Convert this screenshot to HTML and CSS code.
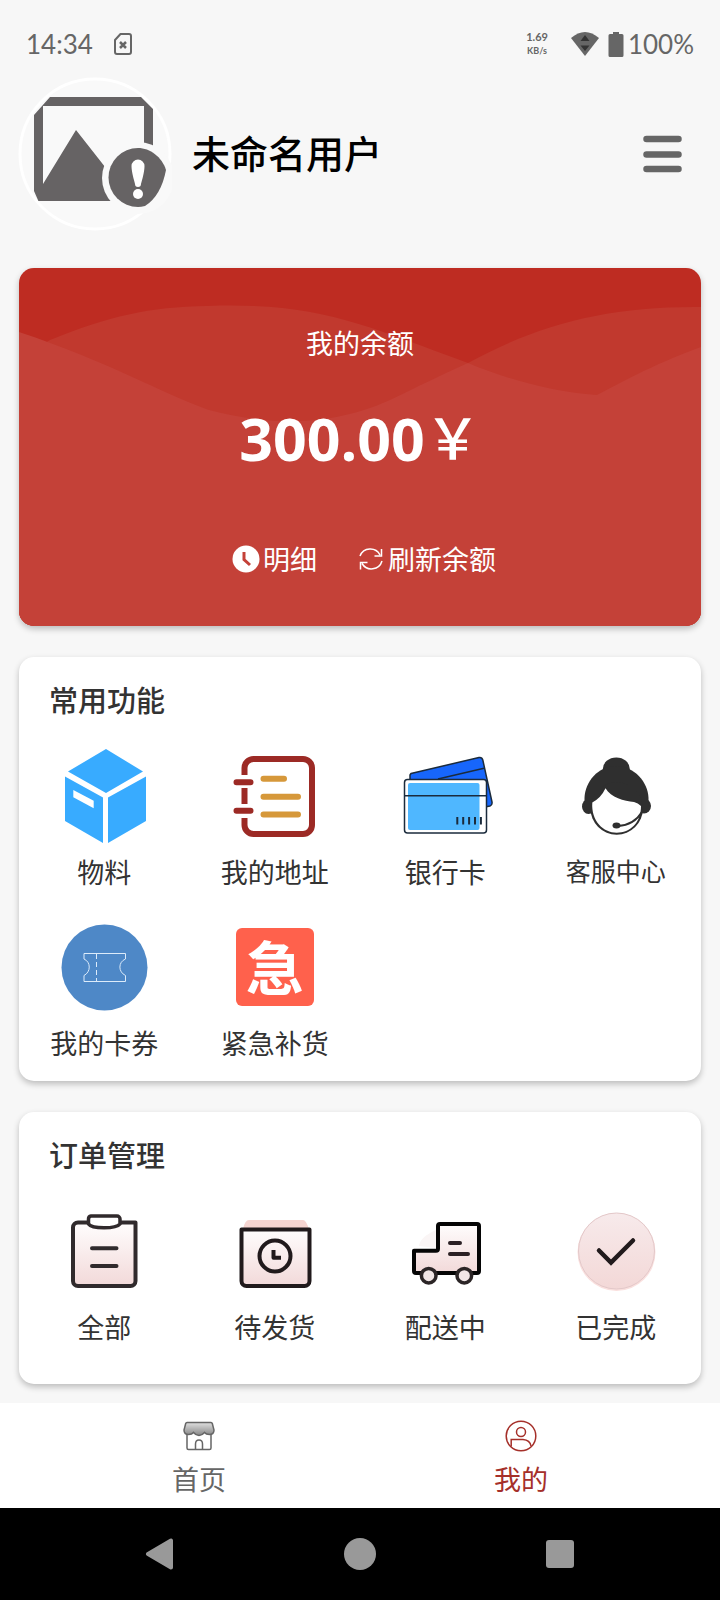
FILE: index.html
```html
<!DOCTYPE html>
<html lang="zh-CN">
<head>
<meta charset="utf-8">
<meta name="viewport" content="width=device-width, initial-scale=1">
<title>我的</title>
<link rel="stylesheet" href="styles.css">
</head>
<body>
<div class="statusbar">
  <span class="clock">14:34</span>
  <svg class="sim" viewBox="0 0 20 24" width="20" height="24" aria-hidden="true">
    <path d="M7.500 2H16a2 2 0 0 1 2 2V20a2 2 0 0 1-2 2H4a2 2 0 0 1-2-2V8Z" fill="none" stroke="#666" stroke-width="2" stroke-linejoin="round"/>
    <path d="M7 10l6 6M13 10l-6 6" stroke="#666" stroke-width="2.500"/>
  </svg>
  <span class="speed"><span>1.69</span><span class="unit">KB/s</span></span>
  <svg class="wifi" viewBox="0 0 30 26" width="30" height="26" aria-hidden="true">
    <path d="M1 7Q15-5 29 7L15 25Z" fill="#666"/>
    <path d="M15 4l4.500 6h-9ZM15 20l-4.500-5.500h9Z" fill="#333"/>
  </svg>
  <svg viewBox="0 0 16 26" width="16" height="26" aria-hidden="true">
    <path d="M5 1h6v2h3a1.500 1.500 0 0 1 1.500 1.500V24.500A1.500 1.500 0 0 1 14 26H2A1.500 1.500 0 0 1 .5 24.500V4.500A1.500 1.500 0 0 1 2 3h3Z" fill="#666"/>
  </svg>
  <span class="battery">100%</span>
</div>

<header class="profile">
  <svg class="avatar" viewBox="0 0 154 154" role="img" aria-label="头像">
    <defs><clipPath id="round"><path d="M32 20H123L135 32V83L148 93L149 98Q140 122 127 130H23L16 114V38Z"/></clipPath></defs>
    <circle cx="77" cy="77" r="75" fill="#f9f9f9" stroke="#fff" stroke-width="3"/>
    <g clip-path="url(#round)">
      <path d="M16 20H135V124H16ZM25 29V107L58 53L91 95L126 90V29Z" fill="#666364" fill-rule="evenodd"/>
    </g>
    <circle cx="120" cy="101" r="36" fill="#f9f9f9"/>
    <path d="M120 71C132 71 144 80 148 93Q143 119 127 129Q123 130 120 130A29.500 29.500 0 0 1 120 71Z" fill="#666364"/>
    <path d="M113.500 89a6.500 6.500 0 0 1 13 0C126.500 95 124 103 123 107a3 3 0 0 1-6 0C116 103 113.500 95 113.500 89Z" fill="#fff"/>
    <circle cx="120" cy="117" r="5" fill="#fff"/>
  </svg>
  <h1 class="username">未命名用户</h1>
  <button class="menu" type="button" aria-label="菜单">
    <svg viewBox="0 0 39 38" width="39" height="38" aria-hidden="true">
      <path d="M3.500 4H35.500M3.500 19.500H35.500M3.500 34H35.500" stroke="#666" stroke-width="6.500" stroke-linecap="round"/>
    </svg>
  </button>
</header>

<main class="content">
  <section class="balance">
    <svg class="waves" viewBox="0 0 682 358" preserveAspectRatio="none" aria-hidden="true">
      <path d="M0 90L31 72C90 48 130 39 188 38C300 34 345 57 449 95C520 56 590 38 682 39V358H0Z" fill="#c1392e"/>
      <path d="M0 64C90 94 140 124 190 142C280 166 340 146 371 132C400 118 420 108 449 95C490 112 535 124 578 127C600 116 630 98 682 79V358H0Z" fill="#c44138"/>
    </svg>
    <h2 class="balance-label">我的余额</h2>
    <p class="amount">300.00<span class="yen">￥</span></p>
    <div class="actions">
      <button class="action" type="button">
        <svg viewBox="0 0 28 28" width="28" height="28" aria-hidden="true">
          <circle cx="14" cy="14" r="13.500" fill="#fff"/>
          <path d="M12 7V14.500L18 20" fill="none" stroke="#c44138" stroke-width="3"/>
        </svg>明细</button>
      <button class="action" type="button">
        <svg viewBox="0 0 28 28" width="28" height="28" aria-hidden="true">
          <path d="M3 11A11 11 0 0 1 23 10M24.500 4V11H17.500M25 16A11 11 0 0 1 5 18.500M3.500 24.500V17.500H10.500" fill="none" stroke="#fff" stroke-width="1.500"/>
        </svg>刷新余额</button>
    </div>
  </section>

  <section class="card">
    <h2 class="card-title">常用功能</h2>
    <div class="grid">
      <a class="item" href="#">
        <svg class="icon" viewBox="0 0 96 96" aria-hidden="true">
          <path d="M50 1L87 23.500L50 45L12 23.500ZM9 28.500L47 49.500V95L9 73ZM90 28.500L52 49.500V95L90 73Z" fill="#38abff"/>
          <path d="M17.300 42L37.700 52.700V60.300L17.300 49.300Z" fill="#fff"/>
        </svg>物料</a>
      <a class="item" href="#">
        <svg class="icon" viewBox="0 0 96 96" fill="none" stroke-width="6" aria-hidden="true">
          <path d="M17.500 27V20a9 9 0 0 1 9-9H76a9 9 0 0 1 9 9V77a9 9 0 0 1-9 9H26.500a9 9 0 0 1-9-9V70M17.500 40V56" stroke="#9c2a25"/>
          <path d="M9.500 34.300H23.500M9.500 62.700H23.500" stroke="#9c2a25" stroke-linecap="round"/>
          <path d="M36.500 30.700H57M36.500 48.700H71M36.500 66.500H71" stroke="#d6983a" stroke-linecap="round"/>
        </svg>我的地址</a>
      <a class="item" href="#">
        <svg class="icon" viewBox="0 0 96 96" stroke="#1b2b3c" stroke-width="1.500" stroke-linejoin="round" aria-hidden="true">
          <path d="M14 25.500L82 9.500Q85 9 85.800 12L95 54Q95.500 57 93 58L88 59L13 40V27Z" fill="#1766fb"/>
          <path d="M41 31L87 20.300"/>
          <rect x="7.500" y="31.500" width="82" height="53.500" rx="3" fill="#fff"/>
          <rect x="11" y="35" width="71.500" height="47" rx="2" fill="#4fb7ff" stroke="none"/>
          <path d="M7.500 47.700H89"/>
          <path d="M60.300 69V76.500M66.200 69V76.500M72.100 69V76.500M78 69V76.500M83.900 69V76.500" stroke-width="2"/>
        </svg>银行卡</a>
      <a class="item item-small" href="#">
        <svg class="icon" viewBox="0 0 96 96" aria-hidden="true">
          <ellipse cx="48.300" cy="21" rx="13.500" ry="11.500" fill="#2f2f2f"/>
          <ellipse cx="20.500" cy="58.500" rx="6.500" ry="7.500" fill="#2f2f2f"/>
          <ellipse cx="76" cy="58" rx="7" ry="7.500" fill="#2f2f2f"/>
          <path d="M16.500 58V50C17 34 30 18 48 18S80 34 80.500 50V58Z" fill="#2f2f2f"/>
          <circle cx="48.700" cy="60.500" r="26.200" fill="#2f2f2f"/>
          <path d="M24.300 54.500Q33 50 37.500 40.300C43 50 56 53 66 54Q70 55 73 58C73 75 62 84.700 48.700 84.700S23 73 24.300 54.500Z" fill="#fff"/>
          <path d="M50 78Q66 77 74 64" fill="none" stroke="#2f2f2f" stroke-width="2"/>
          <ellipse cx="48.500" cy="77.500" rx="4" ry="3" fill="#2f2f2f"/>
        </svg>客服中心</a>
      <a class="item" href="#">
        <svg class="icon" viewBox="0 0 96 96" fill="none" stroke="#dcebfa" aria-hidden="true">
          <circle cx="48.500" cy="48.500" r="43" fill="#4e88c7" stroke="none"/>
          <path d="M28 34.500H69.500V40C62 43 62 53 69.500 56.500V62.500H28V56.500C35 53 35 43 28 40Z"/>
          <path d="M40.500 35V62" stroke-dasharray="5 3"/>
        </svg>我的卡券</a>
      <a class="item" href="#">
        <span class="icon"><span class="urgent" aria-hidden="true">急</span></span>紧急补货</a>
    </div>
  </section>

  <section class="card card-orders">
    <h2 class="card-title">订单管理</h2>
    <div class="grid">
      <a class="item" href="#">
        <svg class="icon" viewBox="0 0 96 96" stroke="#302a2c" stroke-width="4" stroke-linejoin="round" stroke-linecap="round" aria-hidden="true">
          <defs><linearGradient id="pink" x1="0" y1="0" x2="0" y2="1"><stop offset="0" stop-color="#fffdfd"/><stop offset="1" stop-color="#f2d9d9"/></linearGradient></defs>
          <path d="M32 19.500H22a5 5 0 0 0-5 5V78a5 5 0 0 0 5 5H74.500a5 5 0 0 0 5-5V19.500Z" fill="url(#pink)"/>
          <path d="M35 13H61a3 3 0 0 1 3 3V21C60 26 36 26 32.500 21V16a3 3 0 0 1 2.500-3Z" fill="#fff" stroke-width="3.500"/>
          <path d="M36 45.300H60.500M36 63H60.500"/>
        </svg>全部</a>
      <a class="item" href="#">
        <svg class="icon" viewBox="0 0 96 96" stroke="#211a1c" stroke-width="4" stroke-linejoin="round" aria-hidden="true">
          <path d="M22 17H76Q79 17 82 26H16Q18 17 22 17Z" fill="#f6d5d1" stroke="none"/>
          <path d="M14.500 26.500H82.500V78a5 5 0 0 1-5 5H19.500a5 5 0 0 1-5-5Z" fill="url(#pink)"/>
          <circle cx="48" cy="53" r="15.500" fill="none"/>
          <path d="M46.500 47V54.700H54" fill="none"/>
        </svg>待发货</a>
      <a class="item" href="#">
        <svg class="icon" viewBox="0 0 96 96" stroke="#050505" stroke-width="4" stroke-linejoin="round" stroke-linecap="round" aria-hidden="true">
          <path d="M22 43Q23 34 39 27V45Z" fill="#faf5f5" stroke="none"/>
          <path d="M17 47.700H39a2 2 0 0 0 2-2V23a2 2 0 0 1 2-2H80a2 2 0 0 1 2 2V68a2 2 0 0 1-2 2H19a2 2 0 0 1-2-2Z" fill="url(#pink)"/>
          <circle cx="31.700" cy="72.700" r="7.300" fill="#f1e6e6" stroke="#2b2526" stroke-width="3.500"/>
          <circle cx="67.300" cy="72.700" r="7.300" fill="#f1e6e6" stroke="#2b2526" stroke-width="3.500"/>
          <path d="M53 40H63M53 51H71" stroke="#2b2024"/>
        </svg>配送中</a>
      <a class="item" href="#">
        <svg class="icon" viewBox="0 0 96 96" aria-hidden="true">
          <defs><linearGradient id="disc" x1="0" y1="0" x2="0" y2="1"><stop offset="0" stop-color="#f7eaeb"/><stop offset="1" stop-color="#f3d8d7"/></linearGradient></defs>
          <circle cx="48.500" cy="49" r="39" fill="#fae0de"/>
          <circle cx="48.500" cy="48" r="38" fill="url(#disc)" stroke="#e3c8c9"/>
          <path d="M31 47.500L43 59.500L65 37.500" fill="none" stroke="#211a1c" stroke-width="4.500" stroke-linecap="round"/>
        </svg>已完成</a>
    </div>
  </section>
</main>

<nav class="tabs">
  <a class="tab" href="#">
    <svg viewBox="0 0 32 32" width="32" height="32" stroke="#666" stroke-width="1.500" aria-hidden="true">
      <defs><linearGradient id="awning" x1="0" y1="0" x2="0" y2="1"><stop offset="0" stop-color="#e0e0e0"/><stop offset="1" stop-color="#858585"/></linearGradient></defs>
      <path d="M4 13V28Q4 29.500 5.500 29.500H26.500Q28 29.500 28 28V13" fill="#fff"/>
      <path d="M4 2.500H28Q29 2.500 29.300 3.500L31 10Q31 14.500 26.500 14.500Q23 14.500 21.500 12.500Q19 15.500 16 15.500T10.500 12.500Q9 14.500 5.500 14.500Q1 14.500 1 10L2.700 3.500Q3 2.500 4 2.500Z" fill="url(#awning)"/>
      <path d="M12.500 29.500V24Q12.500 20 16 20T19.500 24V29.500" fill="none"/>
    </svg>首页</a>
  <a class="tab tab-active" href="#" aria-current="page">
    <svg viewBox="0 0 32 32" width="32" height="32" fill="none" stroke="#a5302a" stroke-width="1.500" aria-hidden="true">
      <circle cx="16" cy="16" r="14.800"/>
      <circle cx="16" cy="12" r="4.500"/>
      <path d="M6.200 26.500V19.500H18Q25 20 26 26"/>
    </svg>我的</a>
</nav>

<div class="sysnav">
  <button type="button" aria-label="返回"><svg viewBox="0 0 32 32" width="32" height="32" aria-hidden="true"><path d="M4 16L27 2.500V29.500Z" fill="#999" stroke="#999" stroke-width="4" stroke-linejoin="round"/></svg></button>
  <button type="button" aria-label="主屏幕"><svg viewBox="0 0 32 32" width="32" height="32" aria-hidden="true"><circle cx="16" cy="16" r="16" fill="#999"/></svg></button>
  <button type="button" aria-label="最近任务"><svg viewBox="0 0 32 32" width="32" height="32" aria-hidden="true"><rect x="2" y="2" width="28" height="28" rx="3" fill="#999"/></svg></button>
</div>
</body>
</html>
```
FILE: styles.css
```css
* {
  box-sizing: border-box;
}

body {
  margin: 0;
  min-height: 100vh;
  display: flex;
  flex-direction: column;
  background: #f7f7f7;
  color: #333;
  font-family: "Noto Sans CJK SC", "Noto Sans", sans-serif;
  font-size: 27px;
  line-height: 40px;
}

h1, h2, p {
  margin: 0;
}

a {
  color: inherit;
  text-decoration: none;
}

button {
  padding: 0;
  border: 0;
  background: none;
  color: inherit;
  font: inherit;
}

svg {
  display: block;
  flex: none;
}

/* Status bar */
.statusbar {
  display: flex;
  align-items: center;
  padding: 30px 26px 19px;
  color: #666;
  font-family: Lato, sans-serif;
  font-size: 26px;
  line-height: 28px;
}

.sim {
  margin-left: 20px;
}

.speed {
  display: flex;
  flex-direction: column;
  align-items: center;
  margin-left: auto;
  font-size: 11px;
  font-weight: 700;
  line-height: 14px;
}

.unit {
  font-size: 9px;
}

.wifi {
  margin: 0 8px 0 22px;
}

.battery {
  margin-left: 4px;
}

/* Profile */
.profile {
  display: flex;
  align-items: center;
  gap: 20px;
  padding: 0 38px 0 18px;
}

.avatar {
  width: 154px;
  height: 154px;
}

.username {
  flex: 1;
  padding-bottom: 4px;
  color: #000;
  font-size: 38px;
  font-weight: 500;
  line-height: 56px;
}

/* Cards */
.content {
  display: flex;
  flex-direction: column;
  gap: 31px;
  padding: 37px 19px 19px;
}

.balance,
.card {
  border-radius: 15px;
  box-shadow: 0 3px 6px rgba(0, 0, 0, 0.24);
}

.balance {
  position: relative;
  overflow: hidden;
  padding: 55px 20px 47px;
  background: #be2c22;
  color: #fff;
  text-align: center;
}

.waves {
  position: absolute;
  inset: 0;
  width: 100%;
  height: 100%;
}

.balance-label,
.amount,
.actions {
  position: relative;
}

.balance-label {
  font-size: 27px;
  font-weight: 400;
}

.amount {
  display: flex;
  justify-content: center;
  margin: 35px 0 61px;
  font-family: "Open Sans", "Noto Sans", sans-serif;
  font-size: 59px;
  font-weight: 700;
  line-height: 80px;
}

.yen {
  font-family: "Noto Sans CJK SC", sans-serif;
  font-size: 56px;
  font-weight: 500;
  line-height: 74px;
}

.actions {
  display: flex;
  justify-content: center;
  gap: 40px;
  padding-left: 8px;
}

.action {
  display: flex;
  align-items: center;
  gap: 3px;
}

.card {
  padding: 22px 0 17px;
  background: #fff;
}

.card-orders {
  padding-bottom: 36px;
}

.card-title {
  padding: 0 30px;
  font-size: 29px;
  font-weight: 500;
}

.grid {
  display: grid;
  grid-template-columns: repeat(4, 1fr);
  row-gap: 26px;
  margin-top: 29px;
}

.item {
  display: flex;
  flex-direction: column;
  align-items: center;
  gap: 8px;
  padding-bottom: 1px;
}

.item-small {
  font-size: 25px;
  line-height: 36px;
}

.icon {
  display: flex;
  align-items: center;
  justify-content: center;
  width: 96px;
  height: 96px;
}

.urgent {
  width: 78px;
  height: 78px;
  border-radius: 6px;
  background: #ff614c;
  color: #fff;
  font-size: 58px;
  font-weight: 700;
  line-height: 74px;
  text-align: center;
}

/* Tab bar */
.tabs {
  display: flex;
  margin-top: auto;
  padding: 17px 38px 9px;
  background: #fff;
  color: #666;
}

.tab {
  flex: 1;
  display: flex;
  flex-direction: column;
  align-items: center;
  gap: 7px;
}

.tab-active {
  color: #a5302a;
}

/* System navigation */
.sysnav {
  display: flex;
  padding: 30px 60px;
  background: #000;
}

.sysnav button {
  flex: 1;
  display: flex;
  justify-content: center;
}
```
